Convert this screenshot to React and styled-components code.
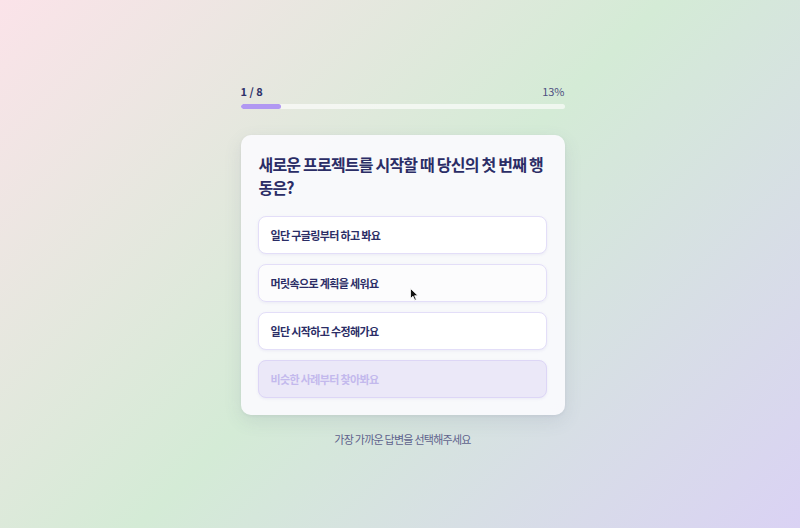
import React, {useState} from 'react';
import styled, {createGlobalStyle} from 'styled-components';

const GlobalStyle = createGlobalStyle`
html, body {
    margin: 0;
    padding: 0;
}
body {
    font-family: "Noto Sans CJK KR", "Noto Sans", sans-serif;
    background: linear-gradient(135deg, #fbe3e9 0%, #d4ebd6 50%, #dad2f4 100%);
    min-height: 100vh;
}
`;

const Page = styled.div`
min-height: 528px;
padding: 3px 0 0 5px;
box-sizing: border-box;
display: flex;
align-items: center;
justify-content: center;
position: relative;
`;

const Column = styled.div`
width: 324px;
display: flex;
flex-direction: column;
`;

const ProgressHead = styled.div`
display: flex;
justify-content: space-between;
align-items: center;
height: 14px;
font-size: 11px;
color: #2e3068;
`;

const Step = styled.span`
font-weight: 600;
`;

const Percent = styled.span`
color: #4d5080;
`;

const Track = styled.div`
margin-top: 6px;
height: 5px;
border-radius: 3px;
background: rgba(255, 255, 255, 0.62);
overflow: hidden;
`;

const Fill = styled.div`
height: 100%;
border-radius: 3px;
background: #b198f2;
`;

const Card = styled.div`
margin-top: 26px;
padding: 18px 18px 17px 17px;
border-radius: 10px;
background: rgba(250, 250, 253, 0.94);
box-shadow: 0 6px 18px rgba(90, 90, 130, 0.12), 0 1px 3px rgba(90, 90, 130, 0.08);
`;

const Question = styled.h2`
margin: 0 0 17px 1px;
font-size: 16px;
line-height: 23px;
font-weight: 700;
letter-spacing: -0.8px;
color: #2b2d66;
`;

const Options = styled.div`
display: flex;
flex-direction: column;
gap: 10px;
`;

const Option = styled.button`
height: 38px;
padding: 0 12px;
display: flex;
align-items: center;
border-radius: 8px;
border: 1px solid ${p => p.$fading ? '#ddd6f6' : '#e3def8'};
background: ${p => p.$fading ? '#ebe8f8' : p.$hover ? 'rgba(255, 255, 255, 0.55)' : '#ffffff'};
box-shadow: 0 1px 3px rgba(120, 110, 190, 0.1);
font-family: inherit;
font-size: 11px;
font-weight: 600;
letter-spacing: -0.65px;
color: ${p => p.$fading ? '#c3b9ed' : '#2b2d66'};
text-align: left;
cursor: pointer;
`;

const Hint = styled.p`
margin: 16px 0 0;
text-align: center;
font-size: 11px;
letter-spacing: -0.75px;
color: #5e628c;
`;

const Pointer = styled.svg`
position: absolute;
left: 410px;
top: 288px;
width: 9px;
height: 13px;
`;

const answers = [
    '일단 구글링부터 하고 봐요',
    '머릿속으로 계획을 세워요',
    '일단 시작하고 수정해가요',
    '비슷한 사례부터 찾아봐요',
];

const App = () => {
    const [step] = useState(1);
    const total = 8;
    const percent = Math.round(step / total * 100);

    return (
        <>
            <GlobalStyle />
            <Page>
                <Column>
                    <ProgressHead>
                        <Step>{step} / {total}</Step>
                        <Percent>{percent}%</Percent>
                    </ProgressHead>
                    <Track>
                        <Fill style={{width: `${step / total * 100}%`}} />
                    </Track>
                    <Card>
                        <Question>새로운 프로젝트를 시작할 때 당신의 첫 번째 행동은?</Question>
                        <Options>
                            {answers.map((a, i) => (
                                <Option key={a} $hover={i === 1} $fading={i === 3}>{a}</Option>
                            ))}
                        </Options>
                    </Card>
                    <Hint>가장 가까운 답변을 선택해주세요</Hint>
                </Column>
                <Pointer viewBox="0 0 9 13">
                    <path d="M0.5 0.5 L0.5 10.5 L3 8.2 L4.8 12.3 L6.3 11.6 L4.6 7.7 L8 7.7 Z" fill="#111" stroke="#fff" strokeWidth="0.8" />
                </Pointer>
            </Page>
        </>
    );
};

export default App;
